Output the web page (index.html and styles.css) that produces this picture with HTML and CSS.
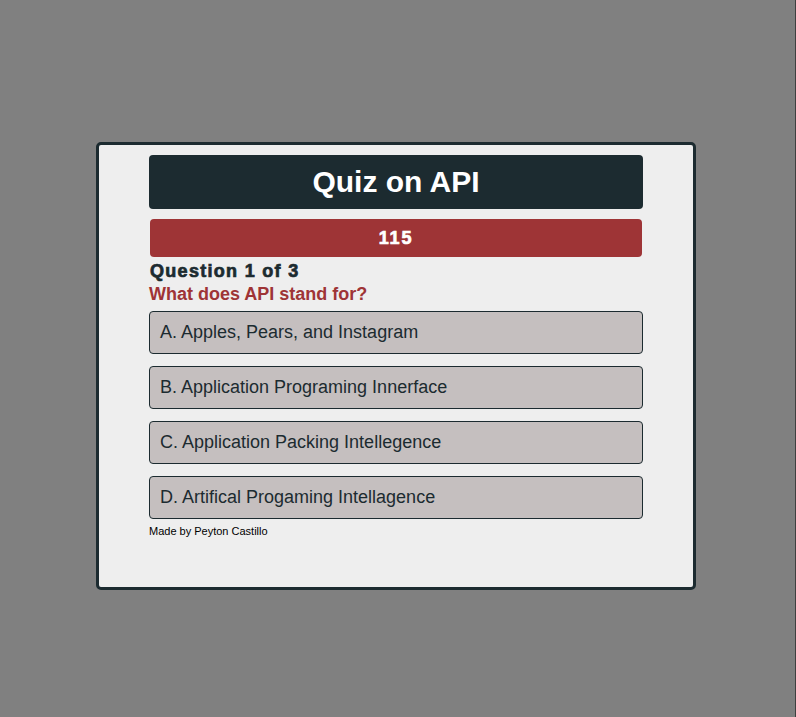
FILE: index.html
```html
<!DOCTYPE html>
<html lang="en">
<head>
<meta charset="utf-8">
<title>Quiz on API</title>
<link rel="stylesheet" href="styles.css">
</head>
<body>
<main class="card">
  <h1 class="title">Quiz on API</h1>
  <div class="timer">115</div>
  <h2 class="q-count">Question 1 of 3</h2>
  <h3 class="q-text">What does API stand for?</h3>
  <div class="options">
    <button class="option">A. Apples, Pears, and Instagram</button>
    <button class="option">B. Application Programing Innerface</button>
    <button class="option">C. Application Packing Intellegence</button>
    <button class="option">D. Artifical Progaming Intellagence</button>
  </div>
  <p class="credit">Made by Peyton Castillo</p>
</main>
</body>
</html>
```

FILE: styles.css
```css
html {
  background: #808080;
  border-right: 1px solid #3f3f3f;
  min-height: 100%;
  box-sizing: border-box;
}
body {
  margin: 0;
  font-family: "Liberation Sans", Arial, sans-serif;
}
.card {
  box-sizing: border-box;
  width: 600px;
  height: 448px;
  margin: 142px 0 0 96px;
  padding: 10px 50px 48px;
  background: #eeeeee;
  border: 3px solid #1c2b30;
  border-radius: 5px;
}
.title {
  margin: 0;
  height: 54px;
  line-height: 54px;
  background: #1c2b30;
  color: #ffffff;
  font-size: 30px;
  font-weight: bold;
  text-align: center;
  border-radius: 4px;
}
.timer {
  margin: 10px 1px 0;
  height: 38px;
  line-height: 39px;
  background: #9e3436;
  color: #ffffff;
  font-size: 18px;
  font-weight: bold;
  letter-spacing: 1.8px;
  -webkit-text-stroke: 0.7px #ffffff;
  text-align: center;
  border-radius: 4px;
}
.q-count {
  margin: 4px 0 0 1px;
  font-size: 18px;
  line-height: 20px;
  font-weight: bold;
  letter-spacing: 1.3px;
  -webkit-text-stroke: 0.7px #1c2b30;
  color: #1c2b30;
}
.q-text {
  margin: 3px 0 0;
  font-size: 18px;
  line-height: 20px;
  font-weight: bold;
  color: #9e3436;
}
.options {
  display: flex;
  flex-direction: column;
  gap: 12px;
  margin-top: 7px;
}
.option {
  box-sizing: border-box;
  height: 43px;
  padding: 0 10px;
  text-align: left;
  background: #c5bfbf;
  border: 1px solid #1c2b30;
  border-radius: 4px;
  color: #1c2b30;
  font-family: "Liberation Sans", Arial, sans-serif;
  font-size: 18px;
}
.credit {
  margin: 6px 0 0;
  font-size: 11px;
  line-height: 13px;
  color: #000000;
}
```
